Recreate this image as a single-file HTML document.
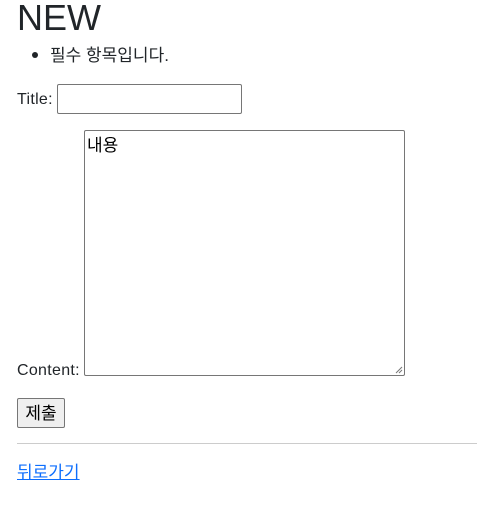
<!DOCTYPE html>
<html><head><meta charset="utf-8"><style>
body{margin:0;width:477px;height:524px;background:#fff;position:relative;font-family:"Liberation Sans","Noto Sans CJK KR",sans-serif;color:#212529;font-size:16px;overflow:hidden}
.a{position:absolute;white-space:nowrap}
.k{font-size:17px}
</style></head><body>
<div class="a" style="left:17px;top:-4px;font-size:36px;line-height:44px;font-weight:300">NEW</div>
<div class="a" style="left:32px;top:52px;width:6px;height:6px;border-radius:50%;background:#212529"></div>
<div class="a k" style="left:50px;top:46px;line-height:20px">필수 항목입니다.</div>
<div class="a" style="left:17px;top:90px;line-height:20px;letter-spacing:0.3px">Title:</div>
<div class="a" style="left:57px;top:84px;width:183px;height:28px;border:1px solid #767676;border-radius:2px"></div>
<div class="a" style="left:84px;top:130px;width:319px;height:244px;border:1px solid #767676;border-radius:2px"></div>
<div class="a k" style="left:87px;top:136px;line-height:20px;color:#000">내용</div>
<svg class="a" style="left:395px;top:366px" width="8" height="8"><path d="M1 7L7 1M4 7L7 4" stroke="#777" stroke-width="1"/></svg>
<div class="a" style="left:17px;top:361px;line-height:20px;letter-spacing:0.3px">Content:</div>
<div class="a k" style="left:17px;top:398px;width:46px;height:28px;border:1px solid #767676;border-radius:2px;background:#efefef;text-align:center;line-height:30px;color:#000">제출</div>
<div class="a" style="left:17px;top:443px;width:460px;height:1px;background:#ccc"></div>
<div class="a k" style="left:17px;top:463px;line-height:20px;color:#0d6efd;text-decoration:underline">뒤로가기</div>
</body></html>
